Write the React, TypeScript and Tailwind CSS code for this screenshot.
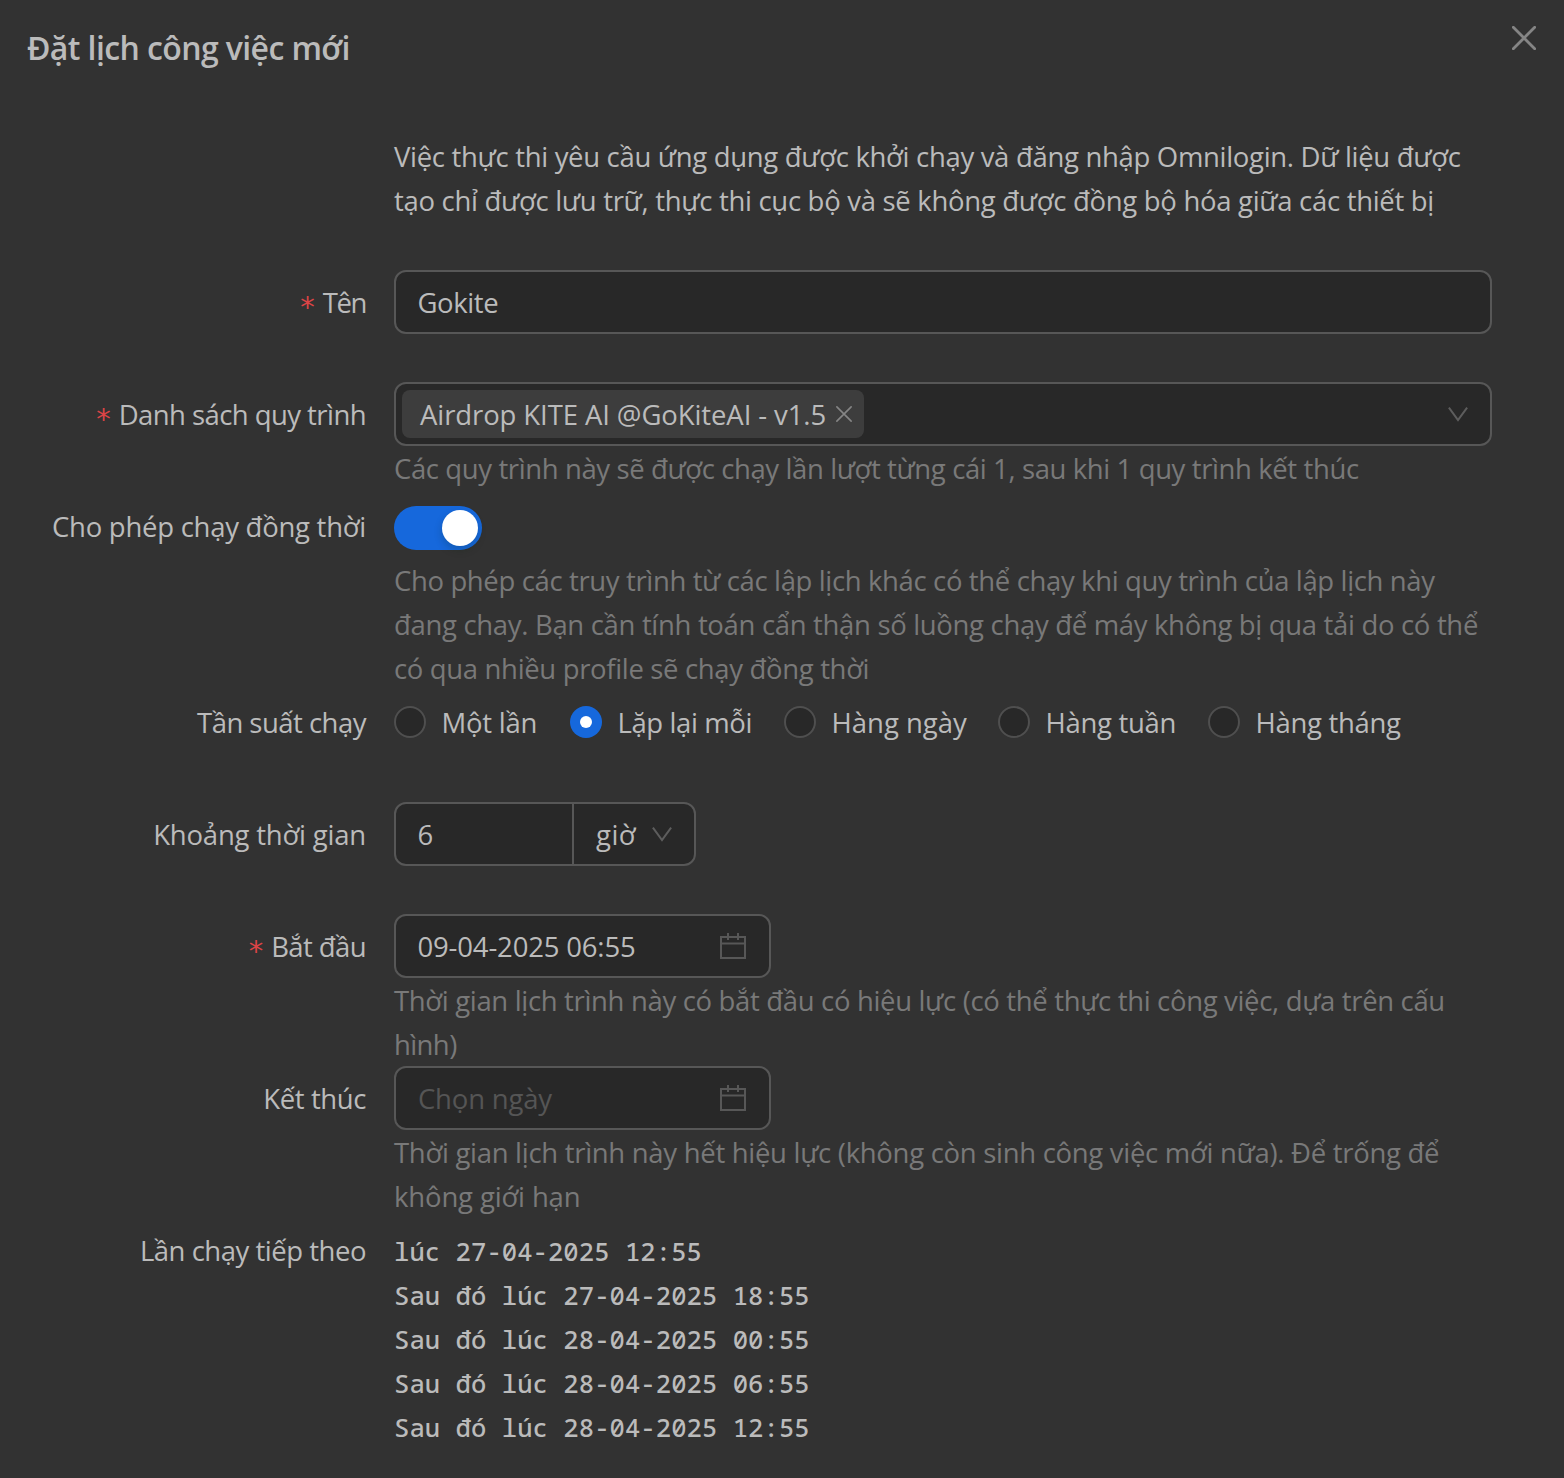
import { ReactNode, useState } from "react";

// Form row: right aligned label + field column
function FormRow({ label, required, tracking = "", className = "", children }: {
  label?: string;
  required?: boolean;
  tracking?: string;
  className?: string;
  children: ReactNode;
}) {
  return (
    <div className={`flex items-start ${className}`}>
      <div className="w-[366px] mr-7 h-16 pt-0.5 flex items-center justify-end shrink-0 whitespace-nowrap">
        {required && (
          <span className="mr-2 pt-2 text-[29px] leading-[44px] text-[#dc4446] font-['DejaVu_Sans',sans-serif]">*</span>
        )}
        <span className={tracking}>{label}</span>
      </div>
      <div className="w-[1098px] shrink-0">{children}</div>
    </div>
  );
}

function Help({ tracking = "", children }: { tracking?: string; children: ReactNode }) {
  return <p className={`h-11 text-[#797979] leading-[46px] whitespace-nowrap ${tracking}`}>{children}</p>;
}

function CloseIcon({ className, width }: { className: string; width: number }) {
  return (
    <svg viewBox="0 0 24 24" className={className} fill="none" stroke="currentColor" strokeWidth={width} strokeLinecap="round">
      <path d="M1.3 1.3 22.7 22.7M22.7 1.3 1.3 22.7" />
    </svg>
  );
}

function ChevronIcon() {
  return (
    <svg viewBox="0 0 20 15" className="w-5 h-[15px] text-[#5d5d5d] shrink-0" fill="none" stroke="currentColor" strokeWidth="2">
      <path d="M.9.6 10 13 19.1.6" />
    </svg>
  );
}

function CalendarIcon() {
  return (
    <svg viewBox="0 0 26 26" className="w-[26px] h-[26px] text-[#575757] shrink-0" fill="none" stroke="currentColor" strokeWidth="2">
      <path d="M1 4h24v21H1zM1 10.5h24M8 0v7M18 0v7" />
    </svg>
  );
}

const frequencies = [
  { name: "Một lần", width: "w-[176px]", tracking: "tracking-[-0.25px]" },
  { name: "Lặp lại mỗi", width: "w-[214px]", tracking: "tracking-[-0.4px]" },
  { name: "Hàng ngày", width: "w-[214px]", tracking: "" },
  { name: "Hàng tuần", width: "w-[210px]", tracking: "tracking-[-0.3px]" },
  { name: "Hàng tháng", width: "", tracking: "tracking-[-0.3px]" },
];

const nextRuns = [
  "lúc 27-04-2025 12:55",
  "Sau đó lúc 27-04-2025 18:55",
  "Sau đó lúc 28-04-2025 00:55",
  "Sau đó lúc 28-04-2025 06:55",
  "Sau đó lúc 28-04-2025 12:55",
];

export default function App() {
  const [frequency, setFrequency] = useState("Lặp lại mỗi");
  const [parallel, setParallel] = useState(true);

  return (
    <div className="w-[1564px] h-[1478px] overflow-hidden bg-[#323232] text-[#bbbbbb] text-[27.5px] leading-[44px] font-['Open_Sans','Noto_Sans',sans-serif]">

      {/* Header */}
      <div className="h-[134px] flex items-start justify-between pl-[27px] pr-7">
        <h1 className="pt-[26px] text-[32px] leading-[44px] font-semibold tracking-[-0.6px]">
          Đặt lịch công việc mới
        </h1>
        <button type="button" className="mt-[26px] text-[#858585]">
          <CloseIcon className="w-6 h-6" width={2.8} />
        </button>
      </div>

      {/* Notice */}
      <div className="h-[88px] pl-[394px] mb-12 pt-px whitespace-nowrap">
        <p className="tracking-[-0.315px]">Việc thực thi yêu cầu ứng dụng được khởi chạy và đăng nhập Omnilogin. Dữ liệu được</p>
        <p className="tracking-[-0.3px]">tạo chỉ được lưu trữ, thực thi cục bộ và sẽ không được đồng bộ hóa giữa các thiết bị</p>
      </div>

      {/* Name */}
      <FormRow label="Tên" required tracking="tracking-[-1.4px]" className="mb-12">
        <div className="h-16 flex items-center px-[21.5px] pt-0.5 border-2 border-[#575757] rounded-xl bg-[#282828] tracking-[-0.4px]">
          Gokite
        </div>
      </FormRow>

      {/* Workflows */}
      <FormRow label="Danh sách quy trình" required tracking="tracking-[-0.56px]" className="mb-1">
        <div className="h-16 flex items-center justify-between pl-1.5 pr-[22px] border-2 border-[#575757] rounded-xl bg-[#282828]">
          <div className="w-[462px] h-12 flex items-center justify-between pl-[18px] pr-3 rounded-lg bg-[#3d3d3d] whitespace-nowrap">
            <span className="pt-0.5 tracking-[-0.1px]">Airdrop KITE AI @GoKiteAI - v1.5</span>
            <button type="button" className="text-[#858585]">
              <CloseIcon className="w-4 h-4" width={2.4} />
            </button>
          </div>
          <ChevronIcon />
        </div>
        <Help tracking="tracking-[-0.39px]">Các quy trình này sẽ được chạy lần lượt từng cái 1, sau khi 1 quy trình kết thúc</Help>
      </FormRow>

      {/* Parallel runs */}
      <FormRow label="Cho phép chạy đồng thời" tracking="tracking-[-0.26px]">
        <div className="h-16 pt-3">
          <button
            type="button"
            onClick={() => setParallel(!parallel)}
            className={`flex w-[88px] h-11 p-1 rounded-full ${parallel ? "justify-end bg-[#1668dc]" : "justify-start bg-[#5a5a5a]"}`}
          >
            <span className="w-9 h-9 rounded-full bg-white shadow-[0_4px_8px_rgba(0,35,11,0.2)]" />
          </button>
        </div>
        <Help tracking="tracking-[-0.365px]">Cho phép các truy trình từ các lập lịch khác có thể chạy khi quy trình của lập lịch này</Help>
        <Help tracking="tracking-[-0.325px]">đang chay. Bạn cần tính toán cẩn thận số luồng chạy để máy không bị qua tải do có thể</Help>
        <Help tracking="tracking-[-0.34px]">có qua nhiều profile sẽ chạy đồng thời</Help>
      </FormRow>

      {/* Frequency */}
      <FormRow label="Tần suất chạy" tracking="tracking-[-0.52px]" className="mb-12">
        <div className="h-16 flex items-center whitespace-nowrap">
          {frequencies.map((item) => (
            <button
              key={item.name}
              type="button"
              onClick={() => setFrequency(item.name)}
              className={`flex items-center gap-[15.5px] ${item.width}`}
            >
              <span
                className={`w-8 h-8 rounded-full flex items-center justify-center shrink-0 ${
                  frequency === item.name ? "bg-[#1668dc]" : "bg-[#282828] border-2 border-[#4f4f4f]"
                }`}
              >
                {frequency === item.name && <span className="w-3 h-3 rounded-full bg-white" />}
              </span>
              <span className={`pt-0.5 ${item.tracking}`}>{item.name}</span>
            </button>
          ))}
        </div>
      </FormRow>

      {/* Interval */}
      <FormRow label="Khoảng thời gian" tracking="tracking-[-0.2px]" className="mb-12">
        <div className="w-[302px] h-16 flex border-2 border-[#575757] rounded-xl bg-[#282828]">
          <div className="w-[178px] flex items-center pl-[21.5px] pt-0.5 border-r-2 border-[#575757]">6</div>
          <div className="flex-1 flex items-center justify-between pl-[22px] pr-[22px]">
            <span className="pt-0.5 tracking-[0.5px]">giờ</span>
            <ChevronIcon />
          </div>
        </div>
      </FormRow>

      {/* Start */}
      <FormRow label="Bắt đầu" required tracking="tracking-[-0.6px]">
        <div className="w-[377px] h-16 flex items-center justify-between pl-[21.5px] pr-[23px] border-2 border-[#575757] rounded-xl bg-[#282828]">
          <span className="pt-0.5 tracking-[-0.17px]">09-04-2025 06:55</span>
          <CalendarIcon />
        </div>
        <Help tracking="tracking-[-0.335px]">Thời gian lịch trình này có bắt đầu có hiệu lực (có thể thực thi công việc, dựa trên cấu</Help>
        <Help tracking="tracking-[-0.6px]">hình)</Help>
      </FormRow>

      {/* End */}
      <FormRow label="Kết thúc" tracking="tracking-[-0.4px]">
        <div className="w-[377px] h-16 flex items-center justify-between pl-[22px] pr-[23px] border-2 border-[#575757] rounded-xl bg-[#282828]">
          <span className="pt-0.5 text-[#555555] tracking-[-0.2px]">Chọn ngày</span>
          <CalendarIcon />
        </div>
        <Help tracking="tracking-[-0.295px]">Thời gian lịch trình này hết hiệu lực (không còn sinh công việc mới nữa). Để trống để</Help>
        <Help tracking="tracking-[-0.15px]">không giới hạn</Help>
      </FormRow>

      {/* Next runs */}
      <FormRow label="Lần chạy tiếp theo" tracking="tracking-[-0.48px]">
        <div className="pt-3 text-[25.6px] tracking-[0.04px] font-medium font-['Noto_Sans_Mono','DejaVu_Sans_Mono',monospace]">
          {nextRuns.map((run) => (
            <p key={run} className="h-11">{run}</p>
          ))}
        </div>
      </FormRow>

    </div>
  );
}
